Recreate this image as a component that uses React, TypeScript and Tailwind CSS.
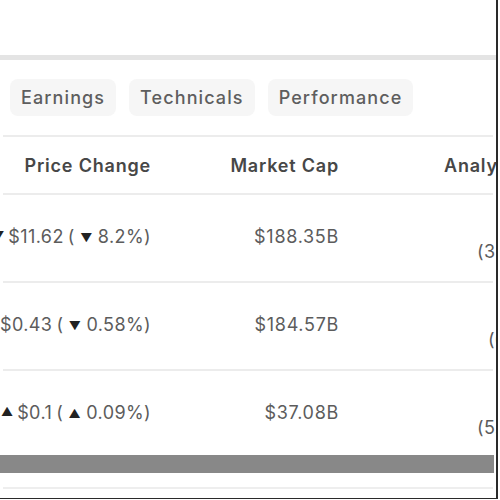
const tabs = ["Earnings", "Technicals", "Performance"];

type Row = {
  dir: "down" | "up";
  change: string;
  pct: string;
  cap: string;
  count: string;
  countPad: string;
};

const rows: Row[] = [
  { dir: "down", change: "$11.62", pct: "8.2%", cap: "$188.35B", count: "(34)", countPad: "pl-[138px]" },
  { dir: "down", change: "$0.43", pct: "0.58%", cap: "$184.57B", count: "(6)", countPad: "pl-[149px]" },
  { dir: "up", change: "$0.1", pct: "0.09%", cap: "$37.08B", count: "(5.1)", countPad: "pl-[138px]" },
];

function Arrow({ dir }: { dir: "down" | "up" }) {
  return <span className="text-[#222] text-[12px] tracking-normal relative -top-[1px]">{dir === "down" ? "▼" : "▲"}</span>;
}

export default function App() {
  return (
    <div className="w-[500px] h-[500px] bg-white overflow-hidden" style={{ fontFamily: "Inter, 'Noto Sans', sans-serif" }}>
      <div className="w-[498px] h-[499px] border-r-2 border-b border-[#2a2a2a] flex flex-col overflow-hidden">
        <div className="h-[55px] shrink-0" />
        <div className="h-[5px] shrink-0 bg-[#e4e4e4]" />

        {/* Tabs */}
        <div className="flex gap-[13px] px-[10px] pt-[19px] pb-[19px] shrink-0">
          {tabs.map((t) => (
            <div
              key={t}
              className="h-[37px] px-[11px] rounded-[8px] bg-[#f6f6f6] flex items-center text-[18px] tracking-[1.1px] font-medium text-[#5e5e5e] whitespace-nowrap shrink-0"
            >
              {t}
            </div>
          ))}
        </div>
        <div className="h-[2px] shrink-0 mx-[3px] bg-[#ececec]" />

        {/* Header */}
        <div className="h-[56px] shrink-0 flex items-center text-[18px] tracking-[0.8px] font-semibold text-[#474747] whitespace-nowrap">
          <div className="w-[151px] shrink-0 flex justify-end">Price Change</div>
          <div className="w-[188px] shrink-0 flex justify-end">Market Cap</div>
          <div className="pl-[105px] shrink-0">Analyst Rating</div>
        </div>
        <div className="h-[2px] shrink-0 mx-[3px] bg-[#ececec]" />

        {/* Rows */}
        {rows.map((r, i) => (
          <div key={r.cap} className="shrink-0">
            <div className="h-[86px] flex items-center text-[18px] tracking-[0.4px] text-[#5c5c5c] whitespace-nowrap">
              <div className="w-[151px] shrink-0 flex justify-end items-center gap-[4px] -mt-[3px]">
                <Arrow dir={r.dir} />
                <span>{r.change}</span>
                <span>
                  ( <Arrow dir={r.dir} /> {r.pct})
                </span>
              </div>
              <div className="w-[188px] shrink-0 flex justify-end -mt-[3px] tracking-[0.7px]">{r.cap}</div>
              <div className={`flex flex-col shrink-0 ${r.countPad}`}>
                <span className="h-[26px]" />
                <span>{r.count}</span>
              </div>
            </div>
            {i < rows.length - 1 && <div className="h-[2px] mx-[3px] bg-[#ececec]" />}
          </div>
        ))}

        {/* Scrollbar */}
        <div className="h-[18px] shrink-0 -mt-[2px] mr-[2px] bg-[#888]" />
        <div className="h-[14px] shrink-0" />
        <div className="h-[2px] shrink-0 mx-[3px] bg-[#eeeeee]" />
      </div>
    </div>
  );
}
